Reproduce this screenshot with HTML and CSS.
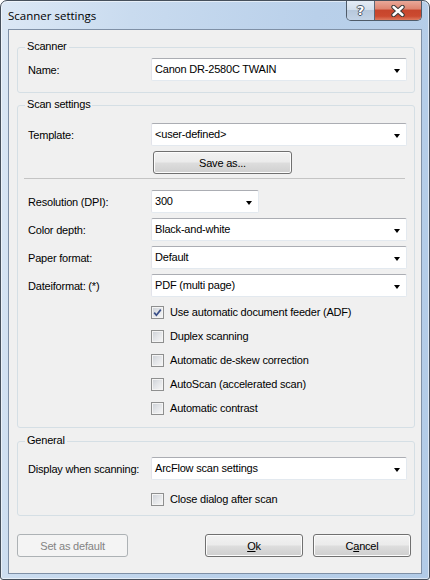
FILE: index.html
```html
<!DOCTYPE html>
<html>
<head>
<meta charset="utf-8">
<link rel="stylesheet" href="styles.css">
</head>
<body>
<div class="window">
  <div class="titlebar">
    <span class="title">Scanner settings</span>
    <div class="caption-btns">
      <div class="cbtn help"><span class="help-glyph">?</span></div>
      <div class="cbtn close">
        <svg width="14" height="12" viewBox="0 0 14 12">
          <path d="M2.5 2 L11.5 10 M11.5 2 L2.5 10" stroke="#3a3a3a" stroke-width="4.4" stroke-linecap="round"/>
          <path d="M2.5 2 L11.5 10 M11.5 2 L2.5 10" stroke="#ffffff" stroke-width="2.4" stroke-linecap="round"/>
        </svg>
      </div>
    </div>
  </div>
  <div class="client">
    <div class="group g-scanner">
      <div class="group-title">Scanner</div>
      <div class="row r-name">
        <span class="lbl">Name:</span>
        <div class="combo"><span class="val">Canon DR-2580C TWAIN</span><span class="arrow"></span></div>
      </div>
    </div>

    <div class="group g-scan">
      <div class="group-title">Scan settings</div>
      <div class="row r-template">
        <span class="lbl">Template:</span>
        <div class="combo"><span class="val">&lt;user-defined&gt;</span><span class="arrow"></span></div>
      </div>
      <div class="row r-saveas">
        <span></span>
        <div class="btn saveas">Save as...</div>
      </div>
      <div class="sep"></div>
      <div class="row r-res">
        <span class="lbl">Resolution (DPI):</span>
        <div class="combo short"><span class="val">300</span><span class="arrow"></span></div>
      </div>
      <div class="row r-next">
        <span class="lbl">Color depth:</span>
        <div class="combo"><span class="val">Black-and-white</span><span class="arrow"></span></div>
      </div>
      <div class="row r-next">
        <span class="lbl">Paper format:</span>
        <div class="combo"><span class="val">Default</span><span class="arrow"></span></div>
      </div>
      <div class="row r-next">
        <span class="lbl">Dateiformat: (*)</span>
        <div class="combo"><span class="val">PDF (multi page)</span><span class="arrow"></span></div>
      </div>
      <div class="checks">
        <div class="check"><span class="box checked"><svg width="11" height="11" viewBox="0 0 11 11"><path d="M2.2 5.6 L4.4 8.2 L8.8 2.6" fill="none" stroke="#3a4f88" stroke-width="1.7"/></svg></span><span>Use automatic document feeder (ADF)</span></div>
        <div class="check"><span class="box"></span><span>Duplex scanning</span></div>
        <div class="check"><span class="box"></span><span>Automatic de-skew correction</span></div>
        <div class="check"><span class="box"></span><span>AutoScan (accelerated scan)</span></div>
        <div class="check"><span class="box"></span><span>Automatic contrast</span></div>
      </div>
    </div>

    <div class="group g-general">
      <div class="group-title">General</div>
      <div class="row r-display">
        <span class="lbl">Display when scanning:</span>
        <div class="combo"><span class="val">ArcFlow scan settings</span><span class="arrow"></span></div>
      </div>
      <div class="checks checks-general">
        <div class="check"><span class="box"></span><span>Close dialog after scan</span></div>
      </div>
    </div>

    <div class="buttons">
      <div class="btn disabled setdefault">Set as default</div>
      <div class="btn ok"><u>O</u>k</div>
      <div class="btn cancel">C<u>a</u>ncel</div>
    </div>
  </div>
</div>
</body>
</html>
```
FILE: styles.css
```css
html, body {
  margin: 0;
  padding: 0;
}
body {
  width: 430px;
  height: 580px;
  overflow: hidden;
  background: #ffffff;
}
.window {
  width: 430px;
  height: 580px;
  box-sizing: border-box;
  border: 1px solid #46505c;
  border-radius: 7px 7px 3px 3px;
  background: linear-gradient(100deg, #dce8f5 0%, #c9dbef 25%, #b9d0ea 60%, #b2cbe7 100%);
  box-shadow: inset 0 0 0 1px rgba(255, 255, 255, 0.55);
  padding: 0 7px 5px 7px;
  display: flex;
  flex-direction: column;
  font-family: "Liberation Sans", Arial, sans-serif;
  font-size: 11px;
  letter-spacing: -0.2px;
  color: #000;
}
.titlebar {
  height: 28px;
  display: flex;
  justify-content: space-between;
  align-items: flex-start;
  flex: none;
}
.title {
  font-family: "Open Sans", "Noto Sans", sans-serif;
  font-size: 11.5px;
  letter-spacing: 0;
  line-height: 28px;
  padding-top: 1px;
  color: #000;
}
.caption-btns {
  display: flex;
  border: 1px solid #4f5b69;
  border-top: none;
  border-radius: 0 0 5px 5px;
  overflow: hidden;
  height: 19px;
}
.cbtn {
  height: 19px;
  display: flex;
  align-items: center;
  justify-content: center;
}
.help {
  width: 27px;
  background: linear-gradient(180deg, #e4ecf5 0%, #d3dfec 45%, #b7c8dc 50%, #c3d3e6 100%);
  border-right: 1px solid #5b6777;
}
.help-glyph {
  font-family: "DejaVu Sans", sans-serif;
  font-weight: bold;
  font-size: 13px;
  line-height: 19px;
  color: #ffffff;
  text-shadow: 1px 0 0 #4a5566, -1px 0 0 #4a5566, 0 1px 0 #4a5566, 0 -1px 0 #4a5566;
}
.close {
  width: 46px;
  background: linear-gradient(180deg, #e9a899 0%, #de8672 40%, #c7452c 50%, #cc4a30 80%, #dd7a5f 100%);
}
.close svg {
  display: block;
}
.client {
  flex: 1;
  border: 1px solid #7f90a6;
  background: #f0f0f0;
  padding: 0 6px 0 8px;
  display: flex;
  flex-direction: column;
}
.group {
  border: 1px solid #d5dfe5;
  border-radius: 3px;
  padding: 0 6px 0 10px;
}
.g-scanner {
  margin-top: 17px;
  padding-bottom: 11px;
}
.g-scan {
  margin-top: 12px;
  padding-bottom: 12px;
}
.g-general {
  margin-top: 13px;
  padding-bottom: 9px;
}
.group-title {
  width: fit-content;
  margin: -9px 0 0 -3px;
  padding: 0 2px;
  background: #f0f0f0;
  line-height: 14px;
}
.row {
  display: grid;
  grid-template-columns: 123px 256px;
  align-items: center;
}
.r-name {
  margin-top: 5px;
}
.r-template {
  margin-top: 12px;
}
.r-saveas {
  margin-top: 5px;
}
.r-res {
  margin-top: 11px;
}
.r-next {
  margin-top: 5px;
}
.r-display {
  margin-top: 10px;
}
.lbl {
  padding-top: 1px;
}
.combo {
  height: 23px;
  box-sizing: border-box;
  background: #ffffff;
  border: 1px solid #dbdfe6;
  border-top-color: #abadb3;
  border-left-color: #e2e3ea;
  border-right-color: #e3e9ef;
  border-bottom-color: #e3e9ef;
  border-radius: 2px;
  display: flex;
  align-items: flex-start;
  justify-content: space-between;
  padding: 3px 6px 0 3px;
}
.combo.short {
  width: 108px;
}
.val {
  line-height: 14px;
  white-space: nowrap;
}
.arrow {
  width: 0;
  height: 0;
  border-left: 3.5px solid transparent;
  border-right: 3.5px solid transparent;
  border-top: 4px solid #000;
  margin-top: 7px;
}
.sep {
  height: 0;
  border-top: 1px solid #c4c4c4;
  margin: 4px 3px 0 -4px;
}
.btn {
  height: 23px;
  box-sizing: border-box;
  border: 1px solid #707070;
  border-radius: 3px;
  background: linear-gradient(180deg, #f2f2f2 0%, #ebebeb 48%, #dddddd 52%, #cfcfcf 100%);
  box-shadow: inset 0 0 0 1px #fcfcfc;
  display: flex;
  align-items: center;
  justify-content: center;
  line-height: 14px;
}
.saveas {
  width: 139px;
  margin-left: 2px;
}
.checks {
  display: flex;
  flex-direction: column;
  gap: 11px;
  margin-top: 9px;
  margin-left: 123px;
}
.checks-general {
  margin-top: 13px;
}
.check {
  display: flex;
  align-items: center;
  gap: 6px;
  height: 13px;
  line-height: 13px;
  white-space: nowrap;
}
.box {
  width: 13px;
  height: 13px;
  box-sizing: border-box;
  border: 1px solid #8e8f8f;
  background: linear-gradient(135deg, #cbcfd5 0%, #e4e6e9 50%, #f7f7f7 100%);
  box-shadow: inset 0 0 0 1px #f4f4f4;
  flex: none;
  display: flex;
  align-items: center;
  justify-content: center;
}
.box svg {
  display: block;
}
.buttons {
  display: flex;
  margin-top: 18px;
}
.setdefault {
  width: 111px;
}
.ok {
  width: 98px;
  margin-left: auto;
}
.cancel {
  width: 98px;
  margin-left: 10px;
  margin-right: 4px;
}
.disabled {
  border-color: #adb2b5;
  background: #f4f4f4;
  box-shadow: none;
  color: #838383;
}
```
